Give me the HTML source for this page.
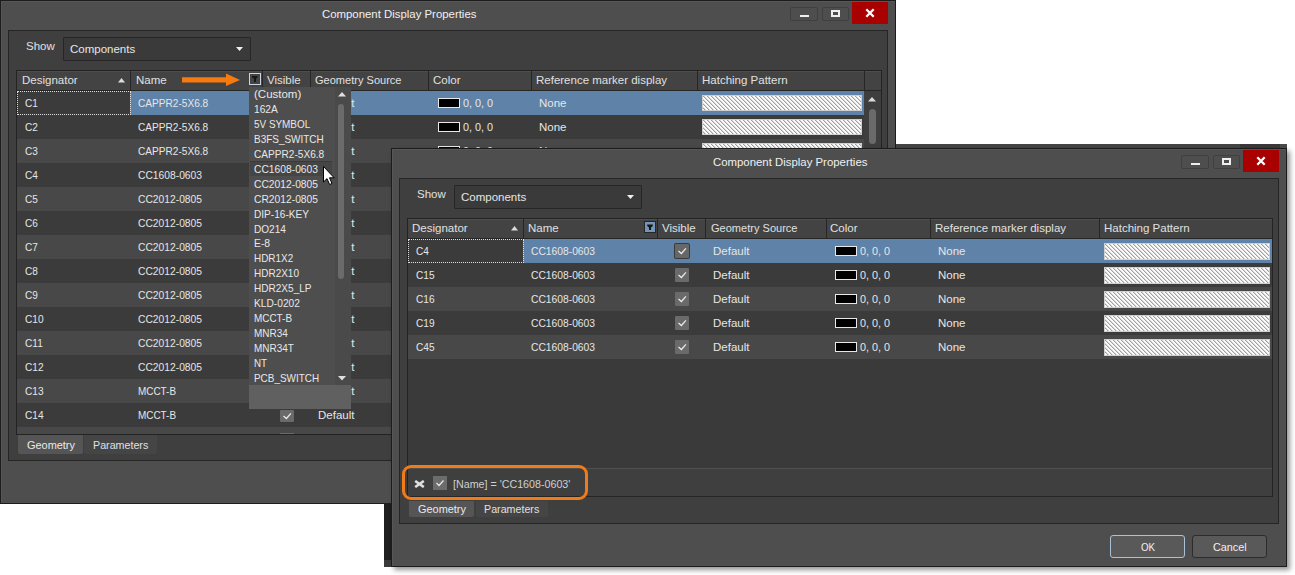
<!DOCTYPE html>
<html><head><meta charset="utf-8"><style>
html,body{margin:0;padding:0;}
body{width:1295px;height:575px;overflow:hidden;background:#fff;position:relative;font-family:"Liberation Sans",sans-serif;}
.a{position:absolute;}
.t{position:absolute;white-space:pre;line-height:normal;}
.hatch{box-sizing:border-box;border:1px solid #d8d8d8;background-color:#f4f4f4;
background-image:repeating-linear-gradient(45deg,#f4f4f4 0px,#f4f4f4 2.2px,#8a8a8a 2.2px,#8a8a8a 3.3px);}
</style></head><body>
<svg width="0" height="0" style="position:absolute"><defs><pattern id="hp" x="1" y="1" width="4" height="4" patternUnits="userSpaceOnUse"><rect x="0" y="0" width="1" height="1" fill="#a0a0a0"/><rect x="1" y="0" width="1" height="1" fill="#d8d8d8"/><rect x="1" y="1" width="1" height="1" fill="#a0a0a0"/><rect x="2" y="1" width="1" height="1" fill="#d8d8d8"/><rect x="2" y="2" width="1" height="1" fill="#a0a0a0"/><rect x="3" y="2" width="1" height="1" fill="#d8d8d8"/><rect x="3" y="3" width="1" height="1" fill="#a0a0a0"/><rect x="0" y="3" width="1" height="1" fill="#d8d8d8"/></pattern></defs></svg>
<div class="a" style="left:0px;top:0px;width:896px;height:504px;background:#4e4e4e;box-sizing:border-box;border:1px solid #1c1c1c;box-shadow:inset 1px 1px 0 #575757;"></div>
<div class="t" style="left:322px;top:7.59px;font-size:11.5px;color:#f0f0f0;transform:scaleX(0.990);transform-origin:0 0;">Component Display Properties</div>
<div class="a" style="left:790px;top:7px;width:28px;height:14px;background:#4e4e4e;box-sizing:border-box;border:1px solid #404040;border-radius:2px;"></div>
<div class="a" style="left:800px;top:15px;width:9px;height:2px;background:#efefef;"></div>
<div class="a" style="left:822px;top:7px;width:27px;height:14px;background:#4e4e4e;box-sizing:border-box;border:1px solid #404040;border-radius:2px;"></div>
<div class="a" style="left:831px;top:10px;width:9px;height:7px;box-sizing:border-box;border:2px solid #efefef;"></div>
<div class="a" style="left:852px;top:2px;width:36px;height:22px;background:#a90000;"></div>
<svg class="a" style="left:865px;top:8px" width="10" height="10"><path d="M1.3 1.3 L8.7 8.7 M8.7 1.3 L1.3 8.7" stroke="#fff" stroke-width="2.3"/></svg>
<div class="a" style="left:8px;top:30px;width:880px;height:431px;background:#3f3f3f;box-sizing:border-box;border:1px solid #252525;"></div>
<div class="t" style="left:26px;top:40.09px;font-size:11.5px;color:#e0e0e0;">Show</div>
<div class="a" style="left:63px;top:37px;width:188px;height:24px;background:#3a3a3a;box-sizing:border-box;border:1px solid #262626;border-radius:1px;"></div>
<div class="t" style="left:70px;top:43.09px;font-size:11.5px;color:#e6e6e6;">Components</div>
<svg class="a" style="left:236px;top:47px" width="8" height="5"><path d="M0 0 L7 0 L3.5 4 Z" fill="#f0f0f0"/></svg>
<div class="a" style="left:16px;top:70px;width:866px;height:365px;background:#3b3b3b;box-sizing:border-box;border:1px solid #232323;"></div>
<div class="a" style="left:17px;top:71px;width:864px;height:19px;background:#434343;box-shadow:inset 0 1px 0 #4e4e4e;"></div>
<div class="a" style="left:17px;top:90px;width:864px;height:1px;background:#262626;"></div>
<div class="a" style="left:130px;top:71px;width:1px;height:19px;background:#262626;"></div>
<div class="a" style="left:262px;top:71px;width:1px;height:19px;background:#262626;"></div>
<div class="a" style="left:310px;top:71px;width:1px;height:19px;background:#262626;"></div>
<div class="a" style="left:428px;top:71px;width:1px;height:19px;background:#262626;"></div>
<div class="a" style="left:531px;top:71px;width:1px;height:19px;background:#262626;"></div>
<div class="a" style="left:697px;top:71px;width:1px;height:19px;background:#262626;"></div>
<div class="a" style="left:864px;top:71px;width:1px;height:19px;background:#262626;"></div>
<div class="t" style="left:22px;top:73.59px;font-size:11.5px;color:#e0e0e0;">Designator</div>
<svg class="a" style="left:118px;top:78px" width="8" height="5"><path d="M0 4.5 L7 4.5 L3.5 0 Z" fill="#dcdcdc"/></svg>
<div class="t" style="left:136px;top:73.59px;font-size:11.5px;color:#e0e0e0;">Name</div>
<div class="t" style="left:267px;top:73.59px;font-size:11.5px;color:#e0e0e0;">Visible</div>
<div class="t" style="left:315px;top:73.59px;font-size:11.5px;color:#e0e0e0;transform:scaleX(0.960);transform-origin:0 0;">Geometry Source</div>
<div class="t" style="left:433px;top:73.59px;font-size:11.5px;color:#e0e0e0;">Color</div>
<div class="t" style="left:536px;top:73.59px;font-size:11.5px;color:#e0e0e0;">Reference marker display</div>
<div class="t" style="left:702px;top:73.59px;font-size:11.5px;color:#e0e0e0;">Hatching Pattern</div>
<svg class="a" style="left:180px;top:72px" width="64" height="16"><path d="M2 5.2 L46 5.2 L46 1.5 L60 8 L46 14 L46 10.5 L2 10.5 Z" fill="#f77a0f"/></svg>
<div class="a" style="left:249px;top:73px;width:12px;height:12px;background:#444;box-sizing:border-box;border:1px solid #c9d5e2;"></div>
<svg class="a" style="left:249px;top:73px" width="12" height="12"><path d="M3 3 L8.5 3 L8.5 4.6 L7 5.6 L7 9 L5 9 L5 5.6 L3 4.6 Z" fill="#161616"/></svg>
<div class="a" style="left:17px;top:91px;width:113px;height:24px;background:#3b3b3b;"></div>
<div class="a" style="left:130px;top:91px;width:734px;height:24px;background:#5f82a8;"></div>
<div class="t" style="left:25px;top:96.59px;font-size:11.5px;color:#e6e6e6;transform:scaleX(0.872);transform-origin:0 0;">C1</div>
<div class="t" style="left:138px;top:96.59px;font-size:11.5px;color:#e6e6e6;transform:scaleX(0.879);transform-origin:0 0;">CAPPR2-5X6.8</div>
<div class="a" style="left:280px;top:98px;width:14px;height:12px;background:#6a6a6a;border-radius:1px;"><svg width="14" height="12" style="position:absolute;left:0;top:0"><path d="M3.5 6.0 L6.4 8.5 L10.9 3.3" stroke="#ececec" stroke-width="1.25" fill="none"/></svg></div>
<div class="t" style="left:318px;top:96.59px;font-size:11.5px;color:#e6e6e6;">Default</div>
<div class="a" style="left:438px;top:98px;width:22px;height:10px;background:#000;box-sizing:border-box;border:1px solid #e8e8e8;"></div>
<div class="t" style="left:463px;top:96.59px;font-size:11.5px;color:#e6e6e6;transform:scaleX(0.940);transform-origin:0 0;">0, 0, 0</div>
<div class="t" style="left:539px;top:96.59px;font-size:11.5px;color:#e6e6e6;">None</div>
<svg class="a" style="left:702px;top:95px" width="160" height="16"><rect x="0.5" y="0.5" width="159" height="15" fill="#fbfbfb" stroke="#cfcfcf"/><rect x="1" y="1" width="158" height="14" fill="url(#hp)"/></svg>
<div class="a" style="left:17px;top:115px;width:847px;height:24px;background:#3b3b3b;"></div>
<div class="t" style="left:25px;top:120.59px;font-size:11.5px;color:#e6e6e6;transform:scaleX(0.872);transform-origin:0 0;">C2</div>
<div class="t" style="left:138px;top:120.59px;font-size:11.5px;color:#e6e6e6;transform:scaleX(0.879);transform-origin:0 0;">CAPPR2-5X6.8</div>
<div class="a" style="left:280px;top:122px;width:14px;height:12px;background:#6a6a6a;border-radius:1px;"><svg width="14" height="12" style="position:absolute;left:0;top:0"><path d="M3.5 6.0 L6.4 8.5 L10.9 3.3" stroke="#ececec" stroke-width="1.25" fill="none"/></svg></div>
<div class="t" style="left:318px;top:120.59px;font-size:11.5px;color:#e6e6e6;">Default</div>
<div class="a" style="left:438px;top:122px;width:22px;height:10px;background:#000;box-sizing:border-box;border:1px solid #e8e8e8;"></div>
<div class="t" style="left:463px;top:120.59px;font-size:11.5px;color:#e6e6e6;transform:scaleX(0.940);transform-origin:0 0;">0, 0, 0</div>
<div class="t" style="left:539px;top:120.59px;font-size:11.5px;color:#e6e6e6;">None</div>
<svg class="a" style="left:702px;top:119px" width="160" height="16"><rect x="0.5" y="0.5" width="159" height="15" fill="#fbfbfb" stroke="#cfcfcf"/><rect x="1" y="1" width="158" height="14" fill="url(#hp)"/></svg>
<div class="a" style="left:17px;top:139px;width:847px;height:24px;background:#484848;"></div>
<div class="t" style="left:25px;top:144.59px;font-size:11.5px;color:#e6e6e6;transform:scaleX(0.872);transform-origin:0 0;">C3</div>
<div class="t" style="left:138px;top:144.59px;font-size:11.5px;color:#e6e6e6;transform:scaleX(0.879);transform-origin:0 0;">CAPPR2-5X6.8</div>
<div class="a" style="left:280px;top:146px;width:14px;height:12px;background:#6a6a6a;border-radius:1px;"><svg width="14" height="12" style="position:absolute;left:0;top:0"><path d="M3.5 6.0 L6.4 8.5 L10.9 3.3" stroke="#ececec" stroke-width="1.25" fill="none"/></svg></div>
<div class="t" style="left:318px;top:144.59px;font-size:11.5px;color:#e6e6e6;">Default</div>
<div class="a" style="left:438px;top:146px;width:22px;height:10px;background:#000;box-sizing:border-box;border:1px solid #e8e8e8;"></div>
<div class="t" style="left:463px;top:144.59px;font-size:11.5px;color:#e6e6e6;transform:scaleX(0.940);transform-origin:0 0;">0, 0, 0</div>
<div class="t" style="left:539px;top:144.59px;font-size:11.5px;color:#e6e6e6;">None</div>
<svg class="a" style="left:702px;top:143px" width="160" height="16"><rect x="0.5" y="0.5" width="159" height="15" fill="#fbfbfb" stroke="#cfcfcf"/><rect x="1" y="1" width="158" height="14" fill="url(#hp)"/></svg>
<div class="a" style="left:17px;top:163px;width:847px;height:24px;background:#3b3b3b;"></div>
<div class="t" style="left:25px;top:168.59px;font-size:11.5px;color:#e6e6e6;transform:scaleX(0.872);transform-origin:0 0;">C4</div>
<div class="t" style="left:138px;top:168.59px;font-size:11.5px;color:#e6e6e6;transform:scaleX(0.894);transform-origin:0 0;">CC1608-0603</div>
<div class="a" style="left:280px;top:170px;width:14px;height:12px;background:#6a6a6a;border-radius:1px;"><svg width="14" height="12" style="position:absolute;left:0;top:0"><path d="M3.5 6.0 L6.4 8.5 L10.9 3.3" stroke="#ececec" stroke-width="1.25" fill="none"/></svg></div>
<div class="t" style="left:318px;top:168.59px;font-size:11.5px;color:#e6e6e6;">Default</div>
<div class="a" style="left:438px;top:170px;width:22px;height:10px;background:#000;box-sizing:border-box;border:1px solid #e8e8e8;"></div>
<div class="t" style="left:463px;top:168.59px;font-size:11.5px;color:#e6e6e6;transform:scaleX(0.940);transform-origin:0 0;">0, 0, 0</div>
<div class="t" style="left:539px;top:168.59px;font-size:11.5px;color:#e6e6e6;">None</div>
<svg class="a" style="left:702px;top:167px" width="160" height="16"><rect x="0.5" y="0.5" width="159" height="15" fill="#fbfbfb" stroke="#cfcfcf"/><rect x="1" y="1" width="158" height="14" fill="url(#hp)"/></svg>
<div class="a" style="left:17px;top:187px;width:847px;height:24px;background:#484848;"></div>
<div class="t" style="left:25px;top:192.59px;font-size:11.5px;color:#e6e6e6;transform:scaleX(0.872);transform-origin:0 0;">C5</div>
<div class="t" style="left:138px;top:192.59px;font-size:11.5px;color:#e6e6e6;transform:scaleX(0.894);transform-origin:0 0;">CC2012-0805</div>
<div class="a" style="left:280px;top:194px;width:14px;height:12px;background:#6a6a6a;border-radius:1px;"><svg width="14" height="12" style="position:absolute;left:0;top:0"><path d="M3.5 6.0 L6.4 8.5 L10.9 3.3" stroke="#ececec" stroke-width="1.25" fill="none"/></svg></div>
<div class="t" style="left:318px;top:192.59px;font-size:11.5px;color:#e6e6e6;">Default</div>
<div class="a" style="left:438px;top:194px;width:22px;height:10px;background:#000;box-sizing:border-box;border:1px solid #e8e8e8;"></div>
<div class="t" style="left:463px;top:192.59px;font-size:11.5px;color:#e6e6e6;transform:scaleX(0.940);transform-origin:0 0;">0, 0, 0</div>
<div class="t" style="left:539px;top:192.59px;font-size:11.5px;color:#e6e6e6;">None</div>
<svg class="a" style="left:702px;top:191px" width="160" height="16"><rect x="0.5" y="0.5" width="159" height="15" fill="#fbfbfb" stroke="#cfcfcf"/><rect x="1" y="1" width="158" height="14" fill="url(#hp)"/></svg>
<div class="a" style="left:17px;top:211px;width:847px;height:24px;background:#3b3b3b;"></div>
<div class="t" style="left:25px;top:216.59px;font-size:11.5px;color:#e6e6e6;transform:scaleX(0.872);transform-origin:0 0;">C6</div>
<div class="t" style="left:138px;top:216.59px;font-size:11.5px;color:#e6e6e6;transform:scaleX(0.894);transform-origin:0 0;">CC2012-0805</div>
<div class="a" style="left:280px;top:218px;width:14px;height:12px;background:#6a6a6a;border-radius:1px;"><svg width="14" height="12" style="position:absolute;left:0;top:0"><path d="M3.5 6.0 L6.4 8.5 L10.9 3.3" stroke="#ececec" stroke-width="1.25" fill="none"/></svg></div>
<div class="t" style="left:318px;top:216.59px;font-size:11.5px;color:#e6e6e6;">Default</div>
<div class="a" style="left:438px;top:218px;width:22px;height:10px;background:#000;box-sizing:border-box;border:1px solid #e8e8e8;"></div>
<div class="t" style="left:463px;top:216.59px;font-size:11.5px;color:#e6e6e6;transform:scaleX(0.940);transform-origin:0 0;">0, 0, 0</div>
<div class="t" style="left:539px;top:216.59px;font-size:11.5px;color:#e6e6e6;">None</div>
<svg class="a" style="left:702px;top:215px" width="160" height="16"><rect x="0.5" y="0.5" width="159" height="15" fill="#fbfbfb" stroke="#cfcfcf"/><rect x="1" y="1" width="158" height="14" fill="url(#hp)"/></svg>
<div class="a" style="left:17px;top:235px;width:847px;height:24px;background:#484848;"></div>
<div class="t" style="left:25px;top:240.59px;font-size:11.5px;color:#e6e6e6;transform:scaleX(0.872);transform-origin:0 0;">C7</div>
<div class="t" style="left:138px;top:240.59px;font-size:11.5px;color:#e6e6e6;transform:scaleX(0.894);transform-origin:0 0;">CC2012-0805</div>
<div class="a" style="left:280px;top:242px;width:14px;height:12px;background:#6a6a6a;border-radius:1px;"><svg width="14" height="12" style="position:absolute;left:0;top:0"><path d="M3.5 6.0 L6.4 8.5 L10.9 3.3" stroke="#ececec" stroke-width="1.25" fill="none"/></svg></div>
<div class="t" style="left:318px;top:240.59px;font-size:11.5px;color:#e6e6e6;">Default</div>
<div class="a" style="left:438px;top:242px;width:22px;height:10px;background:#000;box-sizing:border-box;border:1px solid #e8e8e8;"></div>
<div class="t" style="left:463px;top:240.59px;font-size:11.5px;color:#e6e6e6;transform:scaleX(0.940);transform-origin:0 0;">0, 0, 0</div>
<div class="t" style="left:539px;top:240.59px;font-size:11.5px;color:#e6e6e6;">None</div>
<svg class="a" style="left:702px;top:239px" width="160" height="16"><rect x="0.5" y="0.5" width="159" height="15" fill="#fbfbfb" stroke="#cfcfcf"/><rect x="1" y="1" width="158" height="14" fill="url(#hp)"/></svg>
<div class="a" style="left:17px;top:259px;width:847px;height:24px;background:#3b3b3b;"></div>
<div class="t" style="left:25px;top:264.59px;font-size:11.5px;color:#e6e6e6;transform:scaleX(0.872);transform-origin:0 0;">C8</div>
<div class="t" style="left:138px;top:264.59px;font-size:11.5px;color:#e6e6e6;transform:scaleX(0.894);transform-origin:0 0;">CC2012-0805</div>
<div class="a" style="left:280px;top:266px;width:14px;height:12px;background:#6a6a6a;border-radius:1px;"><svg width="14" height="12" style="position:absolute;left:0;top:0"><path d="M3.5 6.0 L6.4 8.5 L10.9 3.3" stroke="#ececec" stroke-width="1.25" fill="none"/></svg></div>
<div class="t" style="left:318px;top:264.59px;font-size:11.5px;color:#e6e6e6;">Default</div>
<div class="a" style="left:438px;top:266px;width:22px;height:10px;background:#000;box-sizing:border-box;border:1px solid #e8e8e8;"></div>
<div class="t" style="left:463px;top:264.59px;font-size:11.5px;color:#e6e6e6;transform:scaleX(0.940);transform-origin:0 0;">0, 0, 0</div>
<div class="t" style="left:539px;top:264.59px;font-size:11.5px;color:#e6e6e6;">None</div>
<svg class="a" style="left:702px;top:263px" width="160" height="16"><rect x="0.5" y="0.5" width="159" height="15" fill="#fbfbfb" stroke="#cfcfcf"/><rect x="1" y="1" width="158" height="14" fill="url(#hp)"/></svg>
<div class="a" style="left:17px;top:283px;width:847px;height:24px;background:#484848;"></div>
<div class="t" style="left:25px;top:288.59px;font-size:11.5px;color:#e6e6e6;transform:scaleX(0.872);transform-origin:0 0;">C9</div>
<div class="t" style="left:138px;top:288.59px;font-size:11.5px;color:#e6e6e6;transform:scaleX(0.894);transform-origin:0 0;">CC2012-0805</div>
<div class="a" style="left:280px;top:290px;width:14px;height:12px;background:#6a6a6a;border-radius:1px;"><svg width="14" height="12" style="position:absolute;left:0;top:0"><path d="M3.5 6.0 L6.4 8.5 L10.9 3.3" stroke="#ececec" stroke-width="1.25" fill="none"/></svg></div>
<div class="t" style="left:318px;top:288.59px;font-size:11.5px;color:#e6e6e6;">Default</div>
<div class="a" style="left:438px;top:290px;width:22px;height:10px;background:#000;box-sizing:border-box;border:1px solid #e8e8e8;"></div>
<div class="t" style="left:463px;top:288.59px;font-size:11.5px;color:#e6e6e6;transform:scaleX(0.940);transform-origin:0 0;">0, 0, 0</div>
<div class="t" style="left:539px;top:288.59px;font-size:11.5px;color:#e6e6e6;">None</div>
<svg class="a" style="left:702px;top:287px" width="160" height="16"><rect x="0.5" y="0.5" width="159" height="15" fill="#fbfbfb" stroke="#cfcfcf"/><rect x="1" y="1" width="158" height="14" fill="url(#hp)"/></svg>
<div class="a" style="left:17px;top:307px;width:847px;height:24px;background:#3b3b3b;"></div>
<div class="t" style="left:25px;top:312.59px;font-size:11.5px;color:#e6e6e6;transform:scaleX(0.880);transform-origin:0 0;">C10</div>
<div class="t" style="left:138px;top:312.59px;font-size:11.5px;color:#e6e6e6;transform:scaleX(0.894);transform-origin:0 0;">CC2012-0805</div>
<div class="a" style="left:280px;top:314px;width:14px;height:12px;background:#6a6a6a;border-radius:1px;"><svg width="14" height="12" style="position:absolute;left:0;top:0"><path d="M3.5 6.0 L6.4 8.5 L10.9 3.3" stroke="#ececec" stroke-width="1.25" fill="none"/></svg></div>
<div class="t" style="left:318px;top:312.59px;font-size:11.5px;color:#e6e6e6;">Default</div>
<div class="a" style="left:438px;top:314px;width:22px;height:10px;background:#000;box-sizing:border-box;border:1px solid #e8e8e8;"></div>
<div class="t" style="left:463px;top:312.59px;font-size:11.5px;color:#e6e6e6;transform:scaleX(0.940);transform-origin:0 0;">0, 0, 0</div>
<div class="t" style="left:539px;top:312.59px;font-size:11.5px;color:#e6e6e6;">None</div>
<svg class="a" style="left:702px;top:311px" width="160" height="16"><rect x="0.5" y="0.5" width="159" height="15" fill="#fbfbfb" stroke="#cfcfcf"/><rect x="1" y="1" width="158" height="14" fill="url(#hp)"/></svg>
<div class="a" style="left:17px;top:331px;width:847px;height:24px;background:#484848;"></div>
<div class="t" style="left:25px;top:336.59px;font-size:11.5px;color:#e6e6e6;transform:scaleX(0.880);transform-origin:0 0;">C11</div>
<div class="t" style="left:138px;top:336.59px;font-size:11.5px;color:#e6e6e6;transform:scaleX(0.894);transform-origin:0 0;">CC2012-0805</div>
<div class="a" style="left:280px;top:338px;width:14px;height:12px;background:#6a6a6a;border-radius:1px;"><svg width="14" height="12" style="position:absolute;left:0;top:0"><path d="M3.5 6.0 L6.4 8.5 L10.9 3.3" stroke="#ececec" stroke-width="1.25" fill="none"/></svg></div>
<div class="t" style="left:318px;top:336.59px;font-size:11.5px;color:#e6e6e6;">Default</div>
<div class="a" style="left:438px;top:338px;width:22px;height:10px;background:#000;box-sizing:border-box;border:1px solid #e8e8e8;"></div>
<div class="t" style="left:463px;top:336.59px;font-size:11.5px;color:#e6e6e6;transform:scaleX(0.940);transform-origin:0 0;">0, 0, 0</div>
<div class="t" style="left:539px;top:336.59px;font-size:11.5px;color:#e6e6e6;">None</div>
<svg class="a" style="left:702px;top:335px" width="160" height="16"><rect x="0.5" y="0.5" width="159" height="15" fill="#fbfbfb" stroke="#cfcfcf"/><rect x="1" y="1" width="158" height="14" fill="url(#hp)"/></svg>
<div class="a" style="left:17px;top:355px;width:847px;height:24px;background:#3b3b3b;"></div>
<div class="t" style="left:25px;top:360.59px;font-size:11.5px;color:#e6e6e6;transform:scaleX(0.880);transform-origin:0 0;">C12</div>
<div class="t" style="left:138px;top:360.59px;font-size:11.5px;color:#e6e6e6;transform:scaleX(0.894);transform-origin:0 0;">CC2012-0805</div>
<div class="a" style="left:280px;top:362px;width:14px;height:12px;background:#6a6a6a;border-radius:1px;"><svg width="14" height="12" style="position:absolute;left:0;top:0"><path d="M3.5 6.0 L6.4 8.5 L10.9 3.3" stroke="#ececec" stroke-width="1.25" fill="none"/></svg></div>
<div class="t" style="left:318px;top:360.59px;font-size:11.5px;color:#e6e6e6;">Default</div>
<div class="a" style="left:438px;top:362px;width:22px;height:10px;background:#000;box-sizing:border-box;border:1px solid #e8e8e8;"></div>
<div class="t" style="left:463px;top:360.59px;font-size:11.5px;color:#e6e6e6;transform:scaleX(0.940);transform-origin:0 0;">0, 0, 0</div>
<div class="t" style="left:539px;top:360.59px;font-size:11.5px;color:#e6e6e6;">None</div>
<svg class="a" style="left:702px;top:359px" width="160" height="16"><rect x="0.5" y="0.5" width="159" height="15" fill="#fbfbfb" stroke="#cfcfcf"/><rect x="1" y="1" width="158" height="14" fill="url(#hp)"/></svg>
<div class="a" style="left:17px;top:379px;width:847px;height:24px;background:#484848;"></div>
<div class="t" style="left:25px;top:384.59px;font-size:11.5px;color:#e6e6e6;transform:scaleX(0.880);transform-origin:0 0;">C13</div>
<div class="t" style="left:138px;top:384.59px;font-size:11.5px;color:#e6e6e6;transform:scaleX(0.863);transform-origin:0 0;">MCCT-B</div>
<div class="a" style="left:280px;top:386px;width:14px;height:12px;background:#6a6a6a;border-radius:1px;"><svg width="14" height="12" style="position:absolute;left:0;top:0"><path d="M3.5 6.0 L6.4 8.5 L10.9 3.3" stroke="#ececec" stroke-width="1.25" fill="none"/></svg></div>
<div class="t" style="left:318px;top:384.59px;font-size:11.5px;color:#e6e6e6;">Default</div>
<div class="a" style="left:438px;top:386px;width:22px;height:10px;background:#000;box-sizing:border-box;border:1px solid #e8e8e8;"></div>
<div class="t" style="left:463px;top:384.59px;font-size:11.5px;color:#e6e6e6;transform:scaleX(0.940);transform-origin:0 0;">0, 0, 0</div>
<div class="t" style="left:539px;top:384.59px;font-size:11.5px;color:#e6e6e6;">None</div>
<svg class="a" style="left:702px;top:383px" width="160" height="16"><rect x="0.5" y="0.5" width="159" height="15" fill="#fbfbfb" stroke="#cfcfcf"/><rect x="1" y="1" width="158" height="14" fill="url(#hp)"/></svg>
<div class="a" style="left:17px;top:403px;width:847px;height:24px;background:#3b3b3b;"></div>
<div class="t" style="left:25px;top:408.59px;font-size:11.5px;color:#e6e6e6;transform:scaleX(0.880);transform-origin:0 0;">C14</div>
<div class="t" style="left:138px;top:408.59px;font-size:11.5px;color:#e6e6e6;transform:scaleX(0.863);transform-origin:0 0;">MCCT-B</div>
<div class="a" style="left:280px;top:410px;width:14px;height:12px;background:#6a6a6a;border-radius:1px;"><svg width="14" height="12" style="position:absolute;left:0;top:0"><path d="M3.5 6.0 L6.4 8.5 L10.9 3.3" stroke="#ececec" stroke-width="1.25" fill="none"/></svg></div>
<div class="t" style="left:318px;top:408.59px;font-size:11.5px;color:#e6e6e6;">Default</div>
<div class="a" style="left:438px;top:410px;width:22px;height:10px;background:#000;box-sizing:border-box;border:1px solid #e8e8e8;"></div>
<div class="t" style="left:463px;top:408.59px;font-size:11.5px;color:#e6e6e6;transform:scaleX(0.940);transform-origin:0 0;">0, 0, 0</div>
<div class="t" style="left:539px;top:408.59px;font-size:11.5px;color:#e6e6e6;">None</div>
<svg class="a" style="left:702px;top:407px" width="160" height="16"><rect x="0.5" y="0.5" width="159" height="15" fill="#fbfbfb" stroke="#cfcfcf"/><rect x="1" y="1" width="158" height="14" fill="url(#hp)"/></svg>
<div class="a" style="left:17px;top:427px;width:847px;height:7px;background:#484848;"></div>
<div class="a" style="left:280px;top:433px;width:14px;height:1px;background:#6a6a6a;"></div>
<div class="a" style="left:17px;top:91px;width:114px;height:24px;box-sizing:border-box;border:1px dotted #e0e0e0;"></div>
<div class="a" style="left:864px;top:91px;width:17px;height:343px;background:#3e3e3e;"></div>
<svg class="a" style="left:868px;top:97px" width="9" height="5"><path d="M0 4.5 L8 4.5 L4 0 Z" fill="#dcdcdc"/></svg>
<div class="a" style="left:869px;top:109px;width:7px;height:35px;background:#6a6a6a;border-radius:3.5px;"></div>
<div class="a" style="left:18px;top:435px;width:65px;height:19px;background:#555555;border-radius:0 0 2px 2px;"></div>
<div class="t" style="left:27px;top:438.59px;font-size:11.5px;color:#eaeaea;transform:scaleX(0.950);transform-origin:0 0;">Geometry</div>
<div class="a" style="left:84px;top:435px;width:73px;height:19px;background:#454545;border-radius:0 0 2px 2px;"></div>
<div class="t" style="left:93px;top:438.59px;font-size:11.5px;color:#e0e0e0;transform:scaleX(0.930);transform-origin:0 0;">Parameters</div>
<div class="a" style="left:249px;top:87px;width:102px;height:298px;background:#4e4e4e;"></div>
<div class="a" style="left:335px;top:87px;width:16px;height:298px;background:#4a4a4a;"></div>
<div class="a" style="left:250px;top:161px;width:82px;height:15px;background:#454545;box-shadow:inset 0 1px 0 #3a3a3a;"></div>
<div class="t" style="left:254px;top:87.99px;font-size:11.5px;color:#e8e8e8;">(Custom)</div>
<div class="t" style="left:254px;top:102.94px;font-size:11.5px;color:#e8e8e8;transform:scaleX(0.886);transform-origin:0 0;">162A</div>
<div class="t" style="left:254px;top:117.89px;font-size:11.5px;color:#e8e8e8;transform:scaleX(0.862);transform-origin:0 0;">5V SYMBOL</div>
<div class="t" style="left:254px;top:132.84px;font-size:11.5px;color:#e8e8e8;transform:scaleX(0.866);transform-origin:0 0;">B3FS_SWITCH</div>
<div class="t" style="left:254px;top:147.79px;font-size:11.5px;color:#e8e8e8;transform:scaleX(0.879);transform-origin:0 0;">CAPPR2-5X6.8</div>
<div class="t" style="left:254px;top:162.74px;font-size:11.5px;color:#e8e8e8;transform:scaleX(0.894);transform-origin:0 0;">CC1608-0603</div>
<div class="t" style="left:254px;top:177.69px;font-size:11.5px;color:#e8e8e8;transform:scaleX(0.894);transform-origin:0 0;">CC2012-0805</div>
<div class="t" style="left:254px;top:192.64px;font-size:11.5px;color:#e8e8e8;transform:scaleX(0.894);transform-origin:0 0;">CR2012-0805</div>
<div class="t" style="left:254px;top:207.59px;font-size:11.5px;color:#e8e8e8;transform:scaleX(0.879);transform-origin:0 0;">DIP-16-KEY</div>
<div class="t" style="left:254px;top:222.54px;font-size:11.5px;color:#e8e8e8;transform:scaleX(0.876);transform-origin:0 0;">DO214</div>
<div class="t" style="left:254px;top:237.49px;font-size:11.5px;color:#e8e8e8;transform:scaleX(0.900);transform-origin:0 0;">E-8</div>
<div class="t" style="left:254px;top:252.44px;font-size:11.5px;color:#e8e8e8;transform:scaleX(0.864);transform-origin:0 0;">HDR1X2</div>
<div class="t" style="left:254px;top:267.39px;font-size:11.5px;color:#e8e8e8;transform:scaleX(0.869);transform-origin:0 0;">HDR2X10</div>
<div class="t" style="left:254px;top:282.34px;font-size:11.5px;color:#e8e8e8;transform:scaleX(0.874);transform-origin:0 0;">HDR2X5_LP</div>
<div class="t" style="left:254px;top:297.29px;font-size:11.5px;color:#e8e8e8;transform:scaleX(0.886);transform-origin:0 0;">KLD-0202</div>
<div class="t" style="left:254px;top:312.24px;font-size:11.5px;color:#e8e8e8;transform:scaleX(0.863);transform-origin:0 0;">MCCT-B</div>
<div class="t" style="left:254px;top:327.19px;font-size:11.5px;color:#e8e8e8;transform:scaleX(0.866);transform-origin:0 0;">MNR34</div>
<div class="t" style="left:254px;top:342.14px;font-size:11.5px;color:#e8e8e8;transform:scaleX(0.864);transform-origin:0 0;">MNR34T</div>
<div class="t" style="left:254px;top:357.09px;font-size:11.5px;color:#e8e8e8;transform:scaleX(0.850);transform-origin:0 0;">NT</div>
<div class="t" style="left:254px;top:372.04px;font-size:11.5px;color:#e8e8e8;transform:scaleX(0.863);transform-origin:0 0;">PCB_SWITCH</div>
<svg class="a" style="left:338px;top:92px" width="8" height="5"><path d="M0 4.5 L8 4.5 L4 0 Z" fill="#e0e0e0"/></svg>
<svg class="a" style="left:338px;top:376px" width="8" height="5"><path d="M0 0 L8 0 L4 4.5 Z" fill="#e0e0e0"/></svg>
<div class="a" style="left:338px;top:104px;width:6px;height:175px;background:#6b6b6b;border-radius:3px;"></div>
<div class="a" style="left:249px;top:385px;width:102px;height:24px;background:#606060;"></div>
<svg class="a" style="left:323px;top:166px" width="14" height="21"><path d="M0.5 0.5 L0.5 16 L4 12.6 L6.6 18.5 L9 17.5 L6.5 11.8 L11.2 11.8 Z" fill="#fff" stroke="#000" stroke-width="1"/></svg>
<div class="a" style="left:896px;top:144px;width:391px;height:4px;background:#444444;"></div>
<div class="a" style="left:1240px;top:144px;width:40px;height:4px;background:#393939;"></div>
<div class="a" style="left:1280px;top:144px;width:7px;height:4px;background:#4a4a4a;"></div>
<div class="a" style="left:384px;top:503px;width:7px;height:64px;background:#1f1f1f;"></div>
<div class="a" style="left:384px;top:560px;width:7px;height:7px;background:#3a3a3a;"></div>
<div class="a" style="left:391px;top:148px;width:896px;height:419px;box-shadow:3px 3px 5px rgba(0,0,0,0.42);"></div>
<div class="a" style="left:391px;top:148px;width:896px;height:419px;background:#4e4e4e;box-sizing:border-box;border:1px solid #1c1c1c;box-shadow:inset 1px 1px 0 #575757;"></div>
<div class="t" style="left:713px;top:155.59px;font-size:11.5px;color:#f0f0f0;transform:scaleX(0.990);transform-origin:0 0;">Component Display Properties</div>
<div class="a" style="left:1181px;top:155px;width:28px;height:14px;background:#4e4e4e;box-sizing:border-box;border:1px solid #404040;border-radius:2px;"></div>
<div class="a" style="left:1191px;top:163px;width:9px;height:2px;background:#efefef;"></div>
<div class="a" style="left:1213px;top:155px;width:27px;height:14px;background:#4e4e4e;box-sizing:border-box;border:1px solid #404040;border-radius:2px;"></div>
<div class="a" style="left:1222px;top:158px;width:9px;height:7px;box-sizing:border-box;border:2px solid #efefef;"></div>
<div class="a" style="left:1243px;top:150px;width:36px;height:22px;background:#a90000;"></div>
<svg class="a" style="left:1256px;top:156px" width="10" height="10"><path d="M1.3 1.3 L8.7 8.7 M8.7 1.3 L1.3 8.7" stroke="#fff" stroke-width="2.3"/></svg>
<div class="a" style="left:399px;top:178px;width:880px;height:346px;background:#3f3f3f;box-sizing:border-box;border:1px solid #252525;"></div>
<div class="t" style="left:417px;top:188.09px;font-size:11.5px;color:#e0e0e0;">Show</div>
<div class="a" style="left:454px;top:185px;width:188px;height:24px;background:#3a3a3a;box-sizing:border-box;border:1px solid #262626;border-radius:1px;"></div>
<div class="t" style="left:461px;top:191.09px;font-size:11.5px;color:#e6e6e6;">Components</div>
<svg class="a" style="left:627px;top:195px" width="8" height="5"><path d="M0 0 L7 0 L3.5 4 Z" fill="#f0f0f0"/></svg>
<div class="a" style="left:407px;top:218px;width:866px;height:279px;background:#3a3a3a;box-sizing:border-box;border:1px solid #232323;"></div>
<div class="a" style="left:408px;top:219px;width:864px;height:19px;background:#434343;box-shadow:inset 0 1px 0 #4e4e4e;"></div>
<div class="a" style="left:408px;top:238px;width:864px;height:1px;background:#262626;"></div>
<div class="a" style="left:523px;top:219px;width:1px;height:19px;background:#262626;"></div>
<div class="a" style="left:657px;top:219px;width:1px;height:19px;background:#262626;"></div>
<div class="a" style="left:705px;top:219px;width:1px;height:19px;background:#262626;"></div>
<div class="a" style="left:826px;top:219px;width:1px;height:19px;background:#262626;"></div>
<div class="a" style="left:930px;top:219px;width:1px;height:19px;background:#262626;"></div>
<div class="a" style="left:1099px;top:219px;width:1px;height:19px;background:#262626;"></div>
<div class="t" style="left:412px;top:221.59px;font-size:11.5px;color:#e0e0e0;">Designator</div>
<svg class="a" style="left:511px;top:226px" width="8" height="5"><path d="M0 4.5 L7 4.5 L3.5 0 Z" fill="#dcdcdc"/></svg>
<div class="t" style="left:528px;top:221.59px;font-size:11.5px;color:#e0e0e0;">Name</div>
<div class="t" style="left:662px;top:221.59px;font-size:11.5px;color:#e0e0e0;">Visible</div>
<div class="t" style="left:711px;top:221.59px;font-size:11.5px;color:#e0e0e0;transform:scaleX(0.960);transform-origin:0 0;">Geometry Source</div>
<div class="t" style="left:830px;top:221.59px;font-size:11.5px;color:#e0e0e0;">Color</div>
<div class="t" style="left:935px;top:221.59px;font-size:11.5px;color:#e0e0e0;">Reference marker display</div>
<div class="t" style="left:1104px;top:221.59px;font-size:11.5px;color:#e0e0e0;">Hatching Pattern</div>
<div class="a" style="left:644px;top:221px;width:12px;height:12px;background:#7496b8;box-sizing:border-box;border:1px solid #262626;"></div>
<svg class="a" style="left:644px;top:221px" width="12" height="12"><path d="M3.2 3.6 L8.8 3.6 L8.8 5 L7 6.6 L7 9 L5 9 L5 6.6 L3.2 5 Z" fill="#151515"/></svg>
<div class="a" style="left:408px;top:239px;width:115px;height:24px;background:#3b3b3b;"></div>
<div class="a" style="left:523px;top:239px;width:749px;height:24px;background:#5f82a8;"></div>
<div class="t" style="left:416px;top:244.59px;font-size:11.5px;color:#e6e6e6;transform:scaleX(0.872);transform-origin:0 0;">C4</div>
<div class="t" style="left:531px;top:244.59px;font-size:11.5px;color:#e6e6e6;transform:scaleX(0.894);transform-origin:0 0;">CC1608-0603</div>
<div class="a" style="left:675px;top:244px;width:14px;height:14px;background:#676767;border-radius:1px;box-shadow:0 0 0 1px #3a3a3a;"><svg width="14" height="14" style="position:absolute;left:0;top:0"><path d="M3.5 7.0 L6.4 9.5 L10.9 4.3" stroke="#ececec" stroke-width="1.25" fill="none"/></svg></div>
<div class="t" style="left:713px;top:244.59px;font-size:11.5px;color:#e6e6e6;">Default</div>
<div class="a" style="left:835px;top:246px;width:22px;height:10px;background:#000;box-sizing:border-box;border:1px solid #e8e8e8;"></div>
<div class="t" style="left:860px;top:244.59px;font-size:11.5px;color:#e6e6e6;transform:scaleX(0.940);transform-origin:0 0;">0, 0, 0</div>
<div class="t" style="left:938px;top:244.59px;font-size:11.5px;color:#e6e6e6;">None</div>
<svg class="a" style="left:1104px;top:243px" width="166" height="17"><rect x="0.5" y="0.5" width="165" height="16" fill="#fbfbfb" stroke="#cfcfcf"/><rect x="1" y="1" width="164" height="15" fill="url(#hp)"/></svg>
<div class="a" style="left:408px;top:263px;width:864px;height:24px;background:#3b3b3b;"></div>
<div class="t" style="left:416px;top:268.59px;font-size:11.5px;color:#e6e6e6;transform:scaleX(0.880);transform-origin:0 0;">C15</div>
<div class="t" style="left:531px;top:268.59px;font-size:11.5px;color:#e6e6e6;transform:scaleX(0.894);transform-origin:0 0;">CC1608-0603</div>
<div class="a" style="left:675px;top:268px;width:14px;height:14px;background:#6a6a6a;border-radius:1px;"><svg width="14" height="14" style="position:absolute;left:0;top:0"><path d="M3.5 7.0 L6.4 9.5 L10.9 4.3" stroke="#ececec" stroke-width="1.25" fill="none"/></svg></div>
<div class="t" style="left:713px;top:268.59px;font-size:11.5px;color:#e6e6e6;">Default</div>
<div class="a" style="left:835px;top:270px;width:22px;height:10px;background:#000;box-sizing:border-box;border:1px solid #e8e8e8;"></div>
<div class="t" style="left:860px;top:268.59px;font-size:11.5px;color:#e6e6e6;transform:scaleX(0.940);transform-origin:0 0;">0, 0, 0</div>
<div class="t" style="left:938px;top:268.59px;font-size:11.5px;color:#e6e6e6;">None</div>
<svg class="a" style="left:1104px;top:267px" width="166" height="17"><rect x="0.5" y="0.5" width="165" height="16" fill="#fbfbfb" stroke="#cfcfcf"/><rect x="1" y="1" width="164" height="15" fill="url(#hp)"/></svg>
<div class="a" style="left:408px;top:287px;width:864px;height:24px;background:#484848;"></div>
<div class="t" style="left:416px;top:292.59px;font-size:11.5px;color:#e6e6e6;transform:scaleX(0.880);transform-origin:0 0;">C16</div>
<div class="t" style="left:531px;top:292.59px;font-size:11.5px;color:#e6e6e6;transform:scaleX(0.894);transform-origin:0 0;">CC1608-0603</div>
<div class="a" style="left:675px;top:292px;width:14px;height:14px;background:#6a6a6a;border-radius:1px;"><svg width="14" height="14" style="position:absolute;left:0;top:0"><path d="M3.5 7.0 L6.4 9.5 L10.9 4.3" stroke="#ececec" stroke-width="1.25" fill="none"/></svg></div>
<div class="t" style="left:713px;top:292.59px;font-size:11.5px;color:#e6e6e6;">Default</div>
<div class="a" style="left:835px;top:294px;width:22px;height:10px;background:#000;box-sizing:border-box;border:1px solid #e8e8e8;"></div>
<div class="t" style="left:860px;top:292.59px;font-size:11.5px;color:#e6e6e6;transform:scaleX(0.940);transform-origin:0 0;">0, 0, 0</div>
<div class="t" style="left:938px;top:292.59px;font-size:11.5px;color:#e6e6e6;">None</div>
<svg class="a" style="left:1104px;top:291px" width="166" height="17"><rect x="0.5" y="0.5" width="165" height="16" fill="#fbfbfb" stroke="#cfcfcf"/><rect x="1" y="1" width="164" height="15" fill="url(#hp)"/></svg>
<div class="a" style="left:408px;top:311px;width:864px;height:24px;background:#3b3b3b;"></div>
<div class="t" style="left:416px;top:316.59px;font-size:11.5px;color:#e6e6e6;transform:scaleX(0.880);transform-origin:0 0;">C19</div>
<div class="t" style="left:531px;top:316.59px;font-size:11.5px;color:#e6e6e6;transform:scaleX(0.894);transform-origin:0 0;">CC1608-0603</div>
<div class="a" style="left:675px;top:316px;width:14px;height:14px;background:#6a6a6a;border-radius:1px;"><svg width="14" height="14" style="position:absolute;left:0;top:0"><path d="M3.5 7.0 L6.4 9.5 L10.9 4.3" stroke="#ececec" stroke-width="1.25" fill="none"/></svg></div>
<div class="t" style="left:713px;top:316.59px;font-size:11.5px;color:#e6e6e6;">Default</div>
<div class="a" style="left:835px;top:318px;width:22px;height:10px;background:#000;box-sizing:border-box;border:1px solid #e8e8e8;"></div>
<div class="t" style="left:860px;top:316.59px;font-size:11.5px;color:#e6e6e6;transform:scaleX(0.940);transform-origin:0 0;">0, 0, 0</div>
<div class="t" style="left:938px;top:316.59px;font-size:11.5px;color:#e6e6e6;">None</div>
<svg class="a" style="left:1104px;top:315px" width="166" height="17"><rect x="0.5" y="0.5" width="165" height="16" fill="#fbfbfb" stroke="#cfcfcf"/><rect x="1" y="1" width="164" height="15" fill="url(#hp)"/></svg>
<div class="a" style="left:408px;top:335px;width:864px;height:24px;background:#484848;"></div>
<div class="t" style="left:416px;top:340.59px;font-size:11.5px;color:#e6e6e6;transform:scaleX(0.880);transform-origin:0 0;">C45</div>
<div class="t" style="left:531px;top:340.59px;font-size:11.5px;color:#e6e6e6;transform:scaleX(0.894);transform-origin:0 0;">CC1608-0603</div>
<div class="a" style="left:675px;top:340px;width:14px;height:14px;background:#6a6a6a;border-radius:1px;"><svg width="14" height="14" style="position:absolute;left:0;top:0"><path d="M3.5 7.0 L6.4 9.5 L10.9 4.3" stroke="#ececec" stroke-width="1.25" fill="none"/></svg></div>
<div class="t" style="left:713px;top:340.59px;font-size:11.5px;color:#e6e6e6;">Default</div>
<div class="a" style="left:835px;top:342px;width:22px;height:10px;background:#000;box-sizing:border-box;border:1px solid #e8e8e8;"></div>
<div class="t" style="left:860px;top:340.59px;font-size:11.5px;color:#e6e6e6;transform:scaleX(0.940);transform-origin:0 0;">0, 0, 0</div>
<div class="t" style="left:938px;top:340.59px;font-size:11.5px;color:#e6e6e6;">None</div>
<svg class="a" style="left:1104px;top:339px" width="166" height="17"><rect x="0.5" y="0.5" width="165" height="16" fill="#fbfbfb" stroke="#cfcfcf"/><rect x="1" y="1" width="164" height="15" fill="url(#hp)"/></svg>
<div class="a" style="left:408px;top:239px;width:116px;height:24px;box-sizing:border-box;border:1px dotted #e0e0e0;"></div>
<div class="a" style="left:408px;top:468px;width:864px;height:1px;background:#505050;"></div>
<div class="a" style="left:408px;top:469px;width:864px;height:28px;background:#3f3f3f;"></div>
<div class="a" style="left:408px;top:496px;width:864px;height:1px;background:#262626;"></div>
<svg class="a" style="left:414px;top:480px" width="11" height="8"><path d="M1.2 0.9 L9.8 7.1 M9.8 0.9 L1.2 7.1" stroke="#dedede" stroke-width="2.5"/></svg>
<div class="a" style="left:433px;top:476px;width:14px;height:14px;background:#6c6c6c;"></div>
<svg class="a" style="left:433px;top:476px" width="14" height="14"><path d="M3.5 7 L6 9.5 L10.5 4.5" stroke="#e8e8e8" stroke-width="1.3" fill="none"/></svg>
<div class="t" style="left:453px;top:477.59px;font-size:11.5px;color:#cfcfcf;transform:scaleX(0.930);transform-origin:0 0;">[Name] = 'CC1608-0603'</div>
<div class="a" style="left:402px;top:465px;width:186px;height:35px;box-sizing:border-box;border:3px solid #ef7b1a;border-radius:9px;"></div>
<div class="a" style="left:409px;top:501px;width:65px;height:16px;background:#555555;border-radius:0 0 2px 2px;"></div>
<div class="t" style="left:418px;top:502.59px;font-size:11.5px;color:#eaeaea;transform:scaleX(0.950);transform-origin:0 0;">Geometry</div>
<div class="a" style="left:476px;top:501px;width:72px;height:16px;background:#454545;border-radius:0 0 2px 2px;"></div>
<div class="t" style="left:484px;top:502.59px;font-size:11.5px;color:#e0e0e0;transform:scaleX(0.930);transform-origin:0 0;">Parameters</div>
<div class="a" style="left:1110px;top:535px;width:75px;height:23px;background:#595959;box-sizing:border-box;border:1px solid #a9c1d9;border-radius:3px;"></div>
<div class="t" style="left:1141px;top:540.59px;font-size:11.5px;color:#f0f0f0;transform:scaleX(0.850);transform-origin:0 0;">OK</div>
<div class="a" style="left:1192px;top:535px;width:75px;height:23px;background:#595959;box-sizing:border-box;border:1px solid #2c2c2c;border-radius:3px;"></div>
<div class="t" style="left:1213px;top:540.59px;font-size:11.5px;color:#f0f0f0;transform:scaleX(0.940);transform-origin:0 0;">Cancel</div>
</body></html>
